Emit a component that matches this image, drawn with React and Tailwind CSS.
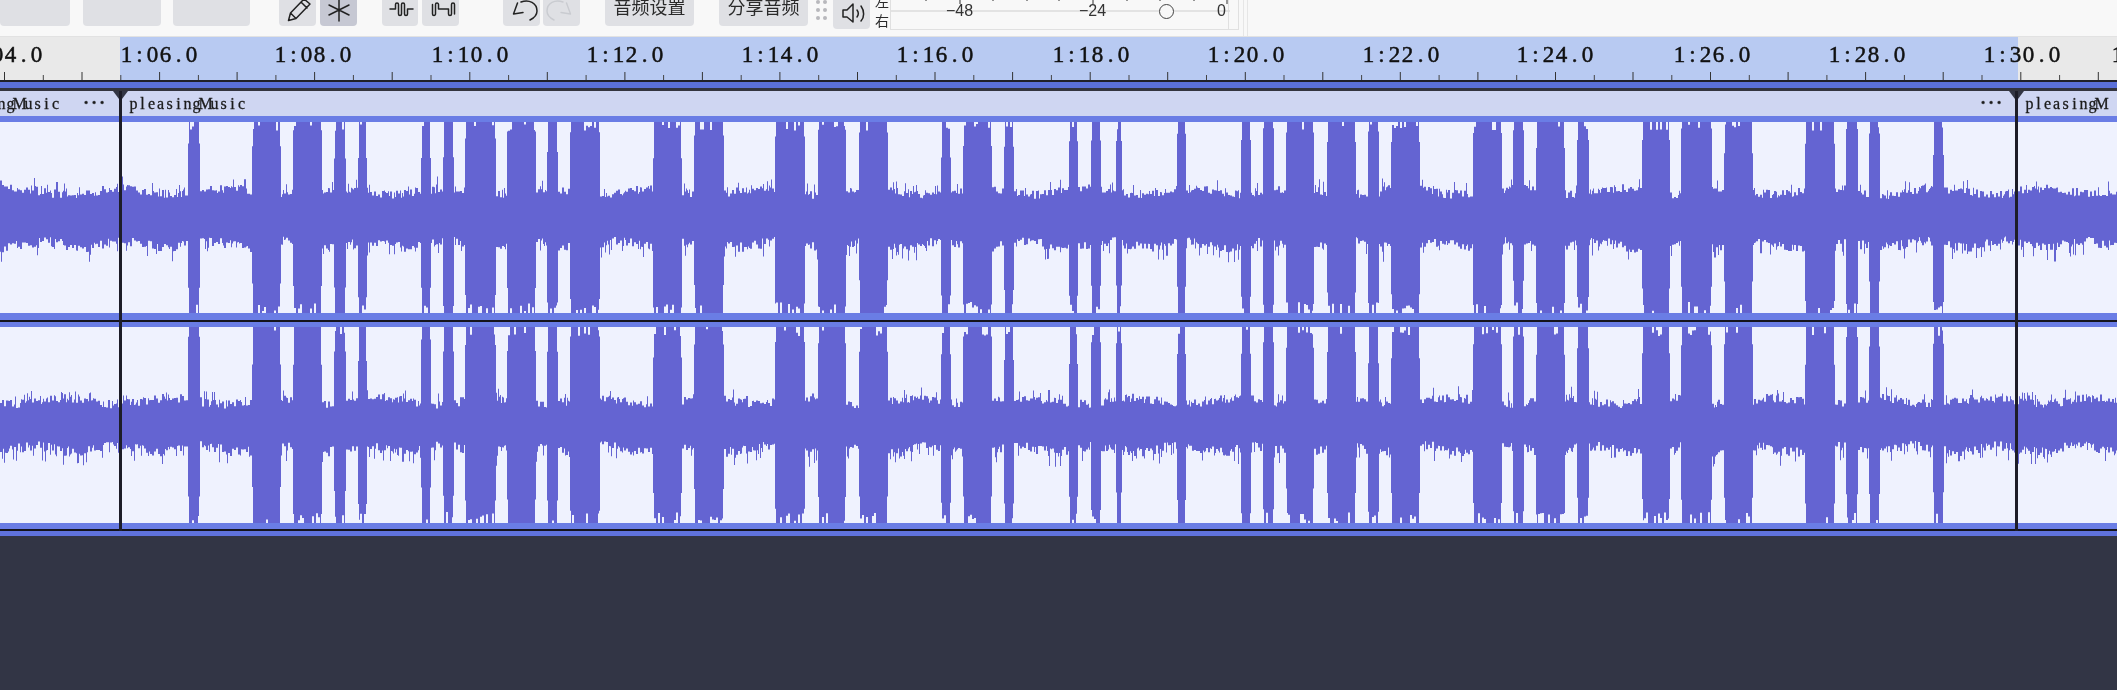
const GAPS = [
  [-1, 119], [121, 188], [200, 252], [281, 293], [322, 334], [346, 358], [367, 421], [431, 443], [454, 465],
  [496, 507], [536, 547], [558, 570], [600, 653], [682, 694], [724, 775], [805, 818], [846, 859],
  [888, 941], [951, 963], [992, 1004], [1014, 1069], [1078, 1091], [1101, 1116], [1122, 1177], [1186, 1241],
  [1251, 1263], [1274, 1286], [1314, 1327], [1356, 1368], [1379, 1391], [1420, 1473], [1502, 1513],
  [1524, 1536], [1565, 1577], [1589, 1642], [1670, 1681], [1712, 1724], [1753, 1805], [1835, 1846],
  [1858, 1869], [1880, 1933], [1944, 2118],
]

// small seeded generator so the wave stays the same on every load
function makeRandom(seed) {
  let s = seed
  return () => {
    s = (s * 1664525 + 1013904223) % 4294967296
    return s / 4294967296
  }
}

function buildWave(seed, height, topAmp, bottomAmp) {
  const rnd = makeRandom(seed)
  const mid = height / 2
  const top = []
  const bottom = []
  let gapIndex = 0
  let holdT = 0
  let holdB = 0
  let notchT = 0
  let notchB = 0
  let lastGap = -1
  let stepT = 0
  let stepB = 0
  for (let x = 0; x < 2117; x++) {
    while (gapIndex < GAPS.length - 1 && x >= GAPS[gapIndex][1]) gapIndex++
    const [a, b] = GAPS[gapIndex]
    const prevEnd = gapIndex > 0 ? GAPS[gapIndex - 1][1] : 0
    const inGap = x >= a && x < b
    if (gapIndex !== lastGap) {
      lastGap = gapIndex
      stepT = 58 + rnd() * 32
      stepB = 62 + rnd() * 28
    }
    let t
    let u
    if (inGap) {
      if (x % 2 === 0 || rnd() < 0.2) {
        holdT = topAmp + (rnd() - 0.5) * 9 + 3 * Math.sin(x / 17 + seed)
        holdB = bottomAmp + (rnd() - 0.5) * 10 + 3 * Math.sin(x / 13 + seed * 2)
      }
      t = holdT + (rnd() < 0.07 ? 8 : 0)
      u = holdB + (rnd() < 0.09 ? 10 : 0)
    } else {
      // notches come in short runs and only bite the first few pixels
      if (x % 2 === 0) {
        notchT = rnd() < 0.2 ? 2 + rnd() * 7 : 0
        notchB = rnd() < 0.28 ? 2 + rnd() * 9 : 0
      }
      t = mid - notchT
      u = mid - notchB
      // the burst steps in by a pixel on its outer edge
      if (x - prevEnd < 1 || a - x <= 1) {
        t = Math.min(t, stepT)
        u = Math.min(u, stepB)
      }
    }
    top.push(mid - t)
    bottom.push(mid + u)
  }
  let d = `M0 ${top[0].toFixed(1)}`
  top.forEach((y, x) => {
    d += `L${x} ${y.toFixed(1)}L${x + 1} ${y.toFixed(1)}`
  })
  for (let x = 2116; x >= 0; x--) {
    d += `L${x + 1} ${bottom[x].toFixed(1)}L${x} ${bottom[x].toFixed(1)}`
  }
  return d + 'Z'
}

const WAVE_ONE = buildWave(7, 191, 26, 27)
const WAVE_TWO = buildWave(23, 196, 24, 24)

function Cells({ text, cell }) {
  return (
    <span className="inline-flex">
      {[...text].map((c, i) => (
        <span key={i} className={`flex justify-center ${cell}`}>{c}</span>
      ))}
    </span>
  )
}

function ToolButton({ className, children }) {
  return (
    <div className={`flex h-[50px] shrink-0 items-end justify-center rounded-[4px] bg-[#dfe0e4] ${className}`}>
      {children}
    </div>
  )
}

function Icon({ children }) {
  return (
    <svg width="36" height="26" viewBox="0 0 36 26" fill="none" stroke="#222" strokeWidth="1.5" strokeLinecap="round" strokeLinejoin="round">
      {children}
    </svg>
  )
}

function Toolbar() {
  return (
    <div className="flex h-[37px] shrink-0 items-end overflow-hidden border-b border-[#e2e2e2] bg-[#f8f8f8] pb-[10px]">
      <ToolButton className="w-[70px]" />
      <ToolButton className="ml-[13px] w-[78px]" />
      <ToolButton className="ml-[12px] w-[77px]" />
      <ToolButton className="ml-[29px] w-[37px]">
        <Icon>
          <path d="M8.5 20.5L10.5 13L24 -1L30 4L16 18.5Z M10.5 13L16 18.5 M21 2L27 8" />
        </Icon>
      </ToolButton>
      <ToolButton className="ml-[4px] w-[37px] !bg-[#c6c8d3]">
        <Icon>
          <path d="M18 0v21 M8 5l20 10 M28 5l-20 10" />
        </Icon>
      </ToolButton>
      <ToolButton className="ml-[25px] w-[36px]">
        <Icon>
          <path d="M8 9h5.5V4.5a1.5 1.5 0 0 1 3 0V14a1.5 1.5 0 0 0 3 0V4.5a1.5 1.5 0 0 1 3 0V14a1.5 1.5 0 0 0 3 0V9h5.5" />
        </Icon>
      </ToolButton>
      <ToolButton className="ml-[4px] w-[37px]">
        <Icon>
          <path d="M9.5 4.5V14a1.5 1.5 0 0 0 3 0V4.5a1.5 1.5 0 0 1 3 0V9h10V14a1.5 1.5 0 0 0 3 0V4.5a1.5 1.5 0 0 1 3 0V14" />
        </Icon>
      </ToolButton>
      <ToolButton className="ml-[44px] w-[37px]">
        <Icon>
          <path d="M17 2C25 -1 33 3 33 11C33 15 30 18 26 20 M13.5 3L9.5 14L19 12.5" />
        </Icon>
      </ToolButton>
      <ToolButton className="ml-[3px] w-[37px]">
        <svg width="36" height="26" viewBox="0 0 36 26" fill="none" stroke="#c9cbd0" strokeWidth="1.4" strokeLinecap="round" strokeLinejoin="round">
          <path d="M19 2C11 -1 3 3 3 11C3 15 6 18 10 20 M22.5 3L26.5 14L17 12.5" />
        </svg>
      </ToolButton>
      <ToolButton className="ml-[25px] w-[89px] pb-[11px] font-['Noto_Sans_CJK_SC',sans-serif] text-[18px] leading-[18px] text-[#2a2a2a]">
        音频设置
      </ToolButton>
      <ToolButton className="ml-[25px] w-[89px] pb-[11px] font-['Noto_Sans_CJK_SC',sans-serif] text-[18px] leading-[18px] text-[#2a2a2a]">
        分享音频
      </ToolButton>
      <div className="mb-[6px] ml-[8px] grid w-[11px] shrink-0 grid-cols-2 gap-x-[3px] gap-y-[4px]">
        {[0, 1, 2, 3, 4, 5].map((n) => (
          <span key={n} className="h-[4px] w-[4px] rounded-full bg-[#b8b8bc]" />
        ))}
      </div>
      <ToolButton className="-mb-[3px] ml-[6px] w-[37px]">
        <svg width="36" height="28" viewBox="0 0 36 28" fill="none" stroke="#222" strokeWidth="1.5" strokeLinecap="round" strokeLinejoin="round">
          <path d="M9 9h4L19 3V21L13 16H9Z M23 9c1.5 2 1.5 5 0 7 M27 5c3.5 5 3.5 11 0 15" />
        </svg>
      </ToolButton>
      <div className="-mb-[4px] ml-[5px] flex w-[15px] shrink-0 flex-col font-['Noto_Sans_CJK_SC',sans-serif] text-[14px] leading-[19px] text-[#2a2a2a]">
        <span>左</span>
        <span>右</span>
      </div>
      <div className="relative -mb-[4px] h-[30px] w-[339px] shrink-0 border border-t-0 border-[#e0e0e0]">
        <svg className="absolute left-0 top-0" width="339" height="30" fill="none">
          <path d="M0 11H339" stroke="#dcdcdc" strokeWidth="1.5" />
          {[35, 69, 102, 136, 168, 202, 236, 269, 303, 336].map((x, i) => (
            <path key={x} d={`M${x} 0V${i === 1 || i === 5 || i === 9 ? 4 : 1}`} stroke="#333" />
          ))}
        </svg>
        <span className="absolute left-[55px] top-[2px] font-['Liberation_Sans',sans-serif] text-[16px] leading-[18px] text-[#333]">−48</span>
        <span className="absolute left-[188px] top-[2px] font-['Liberation_Sans',sans-serif] text-[16px] leading-[18px] text-[#333]">−24</span>
        <span className="absolute left-[326px] top-[2px] font-['Liberation_Sans',sans-serif] text-[16px] leading-[18px] text-[#333]">0</span>
        <span className="absolute left-[268px] top-[4px] h-[15px] w-[15px] rounded-full border-[1.5px] border-[#444] bg-[#f8f8f8]" />
      </div>
      <div className="-mb-[4px] h-[30px] w-[10px] shrink-0 border-r border-b border-[#e0e0e0]" />
      <div className="-mb-[10px] ml-[4px] h-[37px] w-[5px] shrink-0 border-x border-[#e6e6e6]" />
    </div>
  )
}

const LABELS = [
  ['04.0', -9], ['1:06.0', 120], ['1:08.0', 274], ['1:10.0', 431], ['1:12.0', 586], ['1:14.0', 741],
  ['1:16.0', 896], ['1:18.0', 1052], ['1:20.0', 1207], ['1:22.0', 1362], ['1:24.0', 1516],
  ['1:26.0', 1673], ['1:28.0', 1828], ['1:30.0', 1983], ['1', 2111],
]

function Ruler() {
  const ticks = []
  for (let i = -1; i < 28; i++) {
    const x = 82 + i * 77.55
    ticks.push(<path key={`t${i}`} d={`M${x.toFixed(1)} 35V43`} stroke="#333" />)
    ticks.push(<path key={`s${i}`} d={`M${(x + 38.8).toFixed(1)} 38V43`} stroke="#444" />)
  }
  return (
    <div className="relative flex h-[43px] shrink-0 overflow-hidden font-['Liberation_Serif',serif] text-[23px] leading-[24px] text-[#111] [-webkit-text-stroke:0.5px_#111]">
      <div className="w-[120px] bg-[#e9e9e9]" />
      <div className="flex-1 bg-[#b8caf2]" />
      <div className="w-[99px] bg-[#e9e9e9]" />
      <svg className="absolute left-0 top-0" width="2117" height="43" fill="none">{ticks}</svg>
      {LABELS.map(([text, x]) => (
        <span key={text} className="absolute top-[6px]" style={{ left: x }}>
          <Cells text={text} cell="w-[13px]" />
        </span>
      ))}
    </div>
  )
}

function Divider({ className }) {
  return <div className={`absolute bottom-[5px] top-[11px] w-[3px] bg-[#1d1d28] ${className}`} />
}

function ClipCap({ className }) {
  return (
    <svg className={`absolute top-0 ${className}`} width="15" height="8" viewBox="0 0 15 8">
      <path d="M0 0H15L9 8H6Z" fill="#333645" />
    </svg>
  )
}

function Track() {
  return (
    <div className="relative flex shrink-0 flex-col">
      <div className="h-[2px] bg-[#20202a]" />
      <div className="h-[6px] bg-[#5b70da]" />
      <div className="h-[3px] bg-[#33343f]" />
      <div className="relative h-[25px] bg-[#cfd6f2] font-['Liberation_Serif',serif] text-[16px] leading-[25px] text-[#1c1c1c] [-webkit-text-stroke:0.3px_#1c1c1c]">
        <span className="absolute -left-[57px] top-0"><Cells text="pleasingMusic" cell="w-[9px]" /></span>
        <span className="absolute left-[129px] top-0"><Cells text="pleasingMusic" cell="w-[9px]" /></span>
        <span className="absolute left-[2025px] top-0"><Cells text="pleasingM" cell="w-[9px]" /></span>
        <span className="absolute left-[82px] top-0 text-[12px]"><Cells text="•••" cell="w-[8px]" /></span>
        <span className="absolute left-[1979px] top-0 text-[12px]"><Cells text="•••" cell="w-[8px]" /></span>
        <ClipCap className="left-[113px]" />
        <ClipCap className="left-[2009px]" />
      </div>
      <div className="h-[6px] bg-[#6a7de5]" />
      <div className="h-[191px] bg-[#eff2fe]">
        <svg className="block" width="2117" height="191"><path d={WAVE_ONE} fill="#6464d2" /></svg>
      </div>
      <div className="h-[7px] bg-[#6a7de5]" />
      <div className="h-[2px] bg-[#14141c]" />
      <div className="h-[5px] bg-[#6a7de5]" />
      <div className="h-[196px] bg-[#eff2fe]">
        <svg className="block" width="2117" height="196"><path d={WAVE_TWO} fill="#6464d2" /></svg>
      </div>
      <div className="h-[6px] bg-[#6a7de5]" />
      <div className="h-[2px] bg-[#14141c]" />
      <div className="h-[5px] bg-[#5f72dc]" />
      <Divider className="left-[119px]" />
      <Divider className="left-[2015px]" />
    </div>
  )
}

export default function App() {
  return (
    <div className="flex h-[690px] w-[2117px] flex-col overflow-hidden bg-[#323545] blur-[0.4px]">
      <Toolbar />
      <Ruler />
      <Track />
    </div>
  )
}
